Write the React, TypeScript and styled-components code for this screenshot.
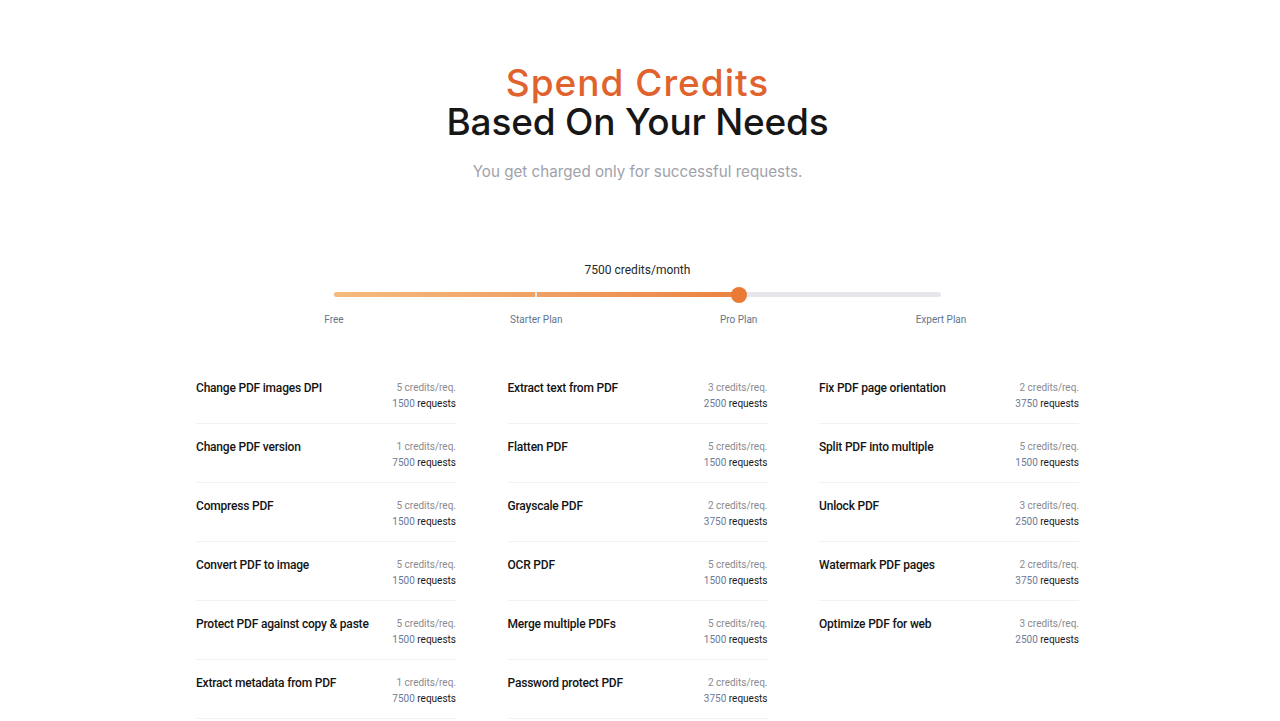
import React from 'react';
import styled, { createGlobalStyle } from 'styled-components';

const GlobalStyle = createGlobalStyle`
  html, body {
    margin: 0;
    padding: 0;
    background: #ffffff;
  }
  body {
    font-family: Inter, 'Noto Sans', sans-serif;
    color: #141414;
    -webkit-font-smoothing: antialiased;
  }
`;

const Page = styled.main`
  display: flex;
  flex-direction: column;
  align-items: center;
  padding: 63px 5px 0 0;
`;

const Heading = styled.h1`
  margin: 0;
  text-align: center;
  font-size: 37px;
  font-weight: 500;
  line-height: 39px;
  letter-spacing: -0.2px;
  color: #171717;
`;

const Accent = styled.span`
  display: block;
  color: #e0622c;
  letter-spacing: 1px;
`;

const Subtitle = styled.p`
  margin: 19px 0 0;
  font-size: 15.2px;
  line-height: 24px;
  color: #a1a1aa;
`;

const SliderBlock = styled.section`
  margin-top: 78px;
  width: 607px;
  display: flex;
  flex-direction: column;
  align-items: center;
  font-family: Roboto, Inter, sans-serif;
`;

const CreditsLabel = styled.div`
  font-size: 12px;
  line-height: 16px;
  color: #27272a;
`;

const Track = styled.div`
  position: relative;
  margin-top: 14px;
  width: 100%;
  height: 5px;
  display: flex;
  gap: 2px;
  border-radius: 3px;
  background: #e5e7eb;
`;

const Fill = styled.div<{ $from: string; $to: string }>`
  flex: 0 0 calc(33.333% - 1px);
  height: 100%;
  background: linear-gradient(90deg, ${(p) => p.$from}, ${(p) => p.$to});
  &:first-child {
    border-radius: 3px 0 0 3px;
  }
`;

const Thumb = styled.div`
  position: absolute;
  top: 50%;
  width: 16px;
  height: 16px;
  border-radius: 50%;
  background: #ea7a36;
  transform: translate(-50%, -50%);
`;

const Ticks = styled.div`
  margin-top: 16px;
  width: 100%;
  display: flex;
  justify-content: space-between;
`;

const Tick = styled.div`
  width: 0;
  display: flex;
  justify-content: center;
  white-space: nowrap;
  font-size: 10px;
  line-height: 14px;
  color: #64748b;
`;

const Grid = styled.div`
  margin-top: 38px;
  width: 883px;
  display: grid;
  grid-template-columns: repeat(3, 260px);
  justify-content: space-between;
  align-items: start;
`;

const Column = styled.ul`
  margin: 0;
  padding: 0;
  list-style: none;
`;

const Item = styled.li<{ $last?: boolean }>`
  height: 59px;
  box-sizing: border-box;
  padding-top: 15px;
  display: flex;
  justify-content: space-between;
  align-items: flex-start;
  gap: 8px;
  border-bottom: 1px solid ${(p) => (p.$last ? 'transparent' : '#f1f1f3')};
  font-family: Roboto, Inter, sans-serif;
`;

const Name = styled.div`
  font-size: 12px;
  line-height: 16px;
  font-weight: 500;
  letter-spacing: -0.2px;
  color: #141414;
`;

const Cost = styled.div`
  display: flex;
  flex-direction: column;
  align-items: flex-end;
  flex-shrink: 0;
  font-size: 10px;
  line-height: 16px;
  white-space: nowrap;
`;

const PerReq = styled.span`
  color: #8a8a8f;
`;

const Requests = styled.span`
  color: #18181b;
`;

const Count = styled.span`
  color: #6b7a99;
`;

type Tool = { name: string; credits: number };

const columns: Tool[][] = [
  [
    { name: 'Change PDF images DPI', credits: 5 },
    { name: 'Change PDF version', credits: 1 },
    { name: 'Compress PDF', credits: 5 },
    { name: 'Convert PDF to image', credits: 5 },
    { name: 'Protect PDF against copy & paste', credits: 5 },
    { name: 'Extract metadata from PDF', credits: 1 },
    { name: 'Extract images from PDF', credits: 2 },
  ],
  [
    { name: 'Extract text from PDF', credits: 3 },
    { name: 'Flatten PDF', credits: 5 },
    { name: 'Grayscale PDF', credits: 2 },
    { name: 'OCR PDF', credits: 5 },
    { name: 'Merge multiple PDFs', credits: 5 },
    { name: 'Password protect PDF', credits: 2 },
    { name: 'Rotate PDF pages', credits: 2 },
  ],
  [
    { name: 'Fix PDF page orientation', credits: 2 },
    { name: 'Split PDF into multiple', credits: 5 },
    { name: 'Unlock PDF', credits: 3 },
    { name: 'Watermark PDF pages', credits: 2 },
    { name: 'Optimize PDF for web', credits: 3 },
  ],
];

const MONTHLY_CREDITS = 7500;
const plans = ['Free', 'Starter Plan', 'Pro Plan', 'Expert Plan'];
const selected = 2;

export default function App() {
  return (
    <>
      <GlobalStyle />
      <Page>
        <Heading>
          <Accent>Spend Credits</Accent>
          Based On Your Needs
        </Heading>
        <Subtitle>You get charged only for successful requests.</Subtitle>

        <SliderBlock>
          <CreditsLabel>{MONTHLY_CREDITS} credits/month</CreditsLabel>
          <Track>
            <Fill $from="#f5bb7e" $to="#f0a165" />
            <Fill $from="#f0a165" $to="#eb8340" />
            <Thumb style={{ left: `${(selected / (plans.length - 1)) * 100}%` }} />
          </Track>
          <Ticks>
            {plans.map((plan) => (
              <Tick key={plan}>{plan}</Tick>
            ))}
          </Ticks>
        </SliderBlock>

        <Grid>
          {columns.map((col, ci) => (
            <Column key={ci}>
              {col.map((tool, i) => (
                <Item key={tool.name} $last={ci === 2 && i === col.length - 1}>
                  <Name>{tool.name}</Name>
                  <Cost>
                    <PerReq>{tool.credits} credits/req.</PerReq>
                    <Requests>
                      <Count>{MONTHLY_CREDITS / tool.credits}</Count> requests
                    </Requests>
                  </Cost>
                </Item>
              ))}
            </Column>
          ))}
        </Grid>
      </Page>
    </>
  );
}
